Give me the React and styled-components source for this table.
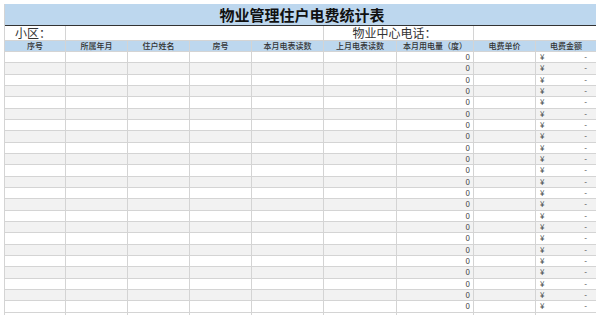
import React from "react";
import styled, { createGlobalStyle } from "styled-components";

const GlobalStyle = createGlobalStyle`
  html, body {
    margin: 0;
    padding: 0;
    background: #fff;
  }
  body {
    font-family: "Noto Sans CJK SC", "Noto Sans", sans-serif;
    color: #333;
  }
`;

const COLS = ["序号", "所属年月", "住户姓名", "房号", "本月电表读数", "上月电表读数", "本月用电量（度）", "电费单价", "电费金额"];

const Sheet = styled.div`
  display: grid;
  grid-template-columns: 61px 62px 62px 62px 72px 73px 77px 62px 61px;
  grid-template-rows: 22px 15px 11px;
  grid-auto-rows: 11.33px;
  margin: 4px 0 0 4px;
  width: 592px;
  border-left: 1px solid #d4d4d4;
  box-sizing: border-box;
  height: 311px;
  overflow: hidden;
`;

const Title = styled.div`
  grid-column: 1 / -1;
  box-sizing: border-box;
  background: #bdd7ee;
  border-bottom: 1px solid #333;
  display: flex;
  align-items: center;
  justify-content: center;
  font-size: 15px;
  font-weight: 700;
  line-height: 1;
  color: #111;
  padding-left: 2px;
`;

const InfoCell = styled.div`
  grid-column: span ${(p) => p.span || 1};
  box-sizing: border-box;
  border-right: 1px solid #d4d4d4;
  border-bottom: 1px solid #d4d4d4;
  display: flex;
  align-items: center;
  justify-content: center;
  font-size: 12px;
  line-height: 1;
  color: #333;
  padding-right: ${(p) => p.shift || 0}px;
`;

const HeadCell = styled.div`
  box-sizing: border-box;
  background: #bdd7ee;
  border-right: 1px solid #d4d4d4;
  border-bottom: 1px solid #d4d4d4;
  display: flex;
  align-items: center;
  justify-content: center;
  font-size: 8px;
  line-height: 1;
  font-weight: 500;
  color: #333;
  white-space: nowrap;
`;

const Cell = styled.div`
  box-sizing: border-box;
  background: ${(p) => (p.odd ? "#f2f2f2" : "#fff")};
  border-right: 1px solid #d4d4d4;
  border-bottom: 1px solid #d4d4d4;
  display: flex;
  align-items: center;
  justify-content: ${(p) => p.align || "flex-start"};
  padding: ${(p) => p.pad || "0"};
  font-size: 8px;
  line-height: 1;
  color: #444;
`;

function Row({ odd }) {
  return (
    <>
      <Cell odd={odd} />
      <Cell odd={odd} />
      <Cell odd={odd} />
      <Cell odd={odd} />
      <Cell odd={odd} />
      <Cell odd={odd} />
      <Cell odd={odd} align="flex-end" pad="0 3px 0 0">0</Cell>
      <Cell odd={odd} />
      <Cell odd={odd} align="space-between" pad="0 9px 0 4px">
        <span>¥</span>
        <span>-</span>
      </Cell>
    </>
  );
}

export default function App() {
  const rows = Array.from({ length: 23 }, (_, i) => i);
  return (
    <>
      <GlobalStyle />
      <Sheet>
        <Title>物业管理住户电费统计表</Title>
        <InfoCell shift={4}>小区：</InfoCell>
        <InfoCell span={4} />
        <InfoCell span={2} shift={8}>物业中心电话：</InfoCell>
        <InfoCell span={2} />
        {COLS.map((c) => (
          <HeadCell key={c}>{c}</HeadCell>
        ))}
        {rows.map((i) => (
          <Row key={i} odd={i % 2 === 1} />
        ))}
        <Cell />
        <Cell />
        <Cell />
        <Cell />
        <Cell />
        <Cell />
        <Cell />
        <Cell />
        <Cell />
      </Sheet>
    </>
  );
}
